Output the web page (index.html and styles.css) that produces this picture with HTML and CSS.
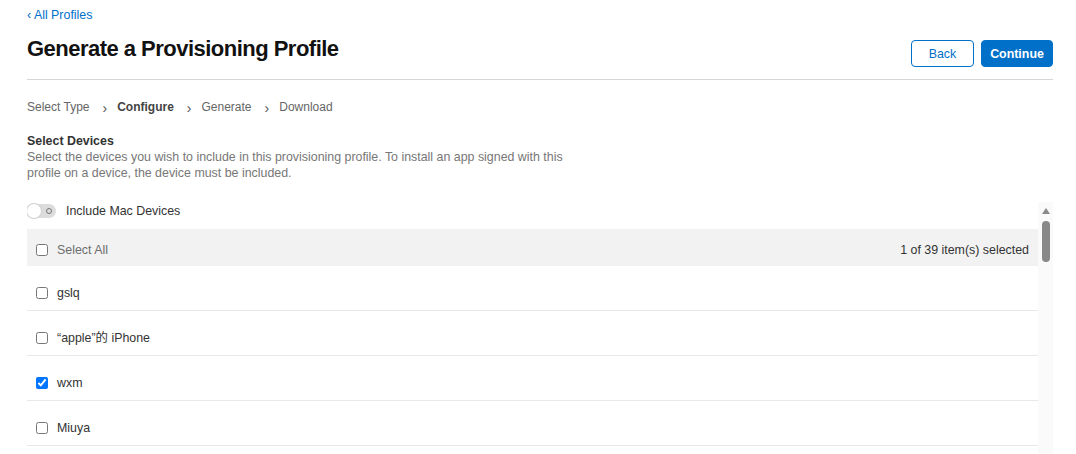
FILE: index.html
```html
<!DOCTYPE html>
<html>
<head>
<meta charset="utf-8">
<link rel="stylesheet" href="styles.css">
</head>
<body>
<div class="page">
  <a class="back-link" href="#">&#8249; All Profiles</a>
  <div class="header">
    <h1 class="title">Generate a Provisioning Profile</h1>
    <div class="actions">
      <button class="btn btn-outline">Back</button>
      <button class="btn btn-primary">Continue</button>
    </div>
  </div>
  <nav class="steps">
    <span class="step">Select Type</span>
    <span class="sep">&#8250;</span>
    <span class="step current">Configure</span>
    <span class="sep">&#8250;</span>
    <span class="step">Generate</span>
    <span class="sep">&#8250;</span>
    <span class="step">Download</span>
  </nav>
  <section class="section">
    <h2 class="section-title">Select Devices</h2>
    <p class="section-desc">Select the devices you wish to include in this provisioning profile. To install an app signed with this profile on a device, the device must be included.</p>
  </section>
  <div class="list-wrap">
    <div class="scroller">
      <div class="toggle-row">
        <span class="toggle"><span class="knob"></span><span class="off-mark"></span></span>
        <span class="toggle-label">Include Mac Devices</span>
      </div>
      <div class="table">
        <div class="thead">
          <label class="cell"><input type="checkbox" class="cb"><span class="muted">Select All</span></label>
          <span class="count">1 of 39 item(s) selected</span>
        </div>
        <div class="row"><label class="cell"><input type="checkbox" class="cb"><span>gslq</span></label></div>
        <div class="row"><label class="cell"><input type="checkbox" class="cb"><span>“apple”的 iPhone</span></label></div>
        <div class="row"><label class="cell"><input type="checkbox" class="cb" checked><span>wxm</span></label></div>
        <div class="row"><label class="cell"><input type="checkbox" class="cb"><span>Miuya</span></label></div>
      </div>
    </div>
    <div class="scrollbar">
      <span class="sb-arrow"></span>
      <span class="sb-thumb"></span>
    </div>
  </div>
</div>
</body>
</html>
```
FILE: styles.css
```css
html, body {
  margin: 0;
  padding: 0;
  background: #fff;
  overflow: hidden;
}
body {
  font-family: "Liberation Sans", Arial, "Noto Sans CJK SC", sans-serif;
  color: #333;
  font-size: 12.4px;
}
.page {
  width: 1026px;
  padding-left: 27px;
}
.back-link {
  display: block;
  color: #0070c9;
  text-decoration: none;
  font-size: 12.4px;
  line-height: 14px;
  padding-top: 8px;
}
.header {
  display: flex;
  align-items: flex-end;
  justify-content: space-between;
  border-bottom: 1px solid #d6d6d6;
  height: 57px;
}
.title {
  margin: 0 0 17px 0;
  font-size: 22px;
  line-height: 26px;
  font-weight: bold;
  color: #111;
  letter-spacing: -0.52px;
}
.actions {
  display: flex;
  gap: 7px;
  margin-bottom: 12px;
}
.btn {
  font-family: inherit;
  font-size: 12.4px;
  height: 27px;
  border-radius: 4px;
  padding: 0;
  cursor: pointer;
}
.btn-outline {
  width: 63px;
  background: #fff;
  color: #0070c9;
  border: 1px solid #0070c9;
}
.btn-primary {
  width: 72px;
  background: #0070c9;
  color: #fff;
  border: 1px solid #0070c9;
  font-weight: bold;
}
.steps {
  display: flex;
  align-items: center;
  margin-top: 20px;
  color: #666;
  font-size: 12px;
  line-height: 14px;
}
.step {
  padding-right: 1px;
}
.step.current {
  font-weight: bold;
  color: #444;
}
.sep {
  font-size: 14px;
  color: #555;
  margin: 0 10px 0 12px;
  position: relative;
  top: 1px;
}
.section {
  margin-top: 19px;
}
.section-title {
  margin: 0;
  font-size: 12.4px;
  line-height: 16px;
  font-weight: bold;
  color: #333;
}
.section-desc {
  margin: 0;
  width: 560px;
  color: #777;
  line-height: 16px;
}
.list-wrap {
  display: flex;
  margin-top: 21px;
  height: 260px;
}
.scroller {
  flex: 1;
  overflow: hidden;
}
.scrollbar {
  width: 15px;
  background: #fafafa;
  display: flex;
  flex-direction: column;
  align-items: center;
}
.sb-arrow {
  width: 0;
  height: 0;
  margin-top: 6px;
  border-left: 4px solid transparent;
  border-right: 4px solid transparent;
  border-bottom: 6px solid #8a8a8a;
}
.sb-thumb {
  width: 8px;
  height: 41px;
  margin-top: 7px;
  border-radius: 4px;
  background: #888;
}
.toggle-row {
  display: flex;
  align-items: center;
  height: 15px;
  margin-top: 1px;
}
.toggle {
  display: inline-flex;
  align-items: center;
  justify-content: space-between;
  width: 29px;
  height: 14px;
  border-radius: 8px;
  background: #dcdcdc;
  margin-right: 10px;
}
.knob {
  width: 14px;
  height: 14px;
  border-radius: 50%;
  background: #fff;
  box-shadow: 0 0 0 1px #d0d0d0;
}
.off-mark {
  width: 4px;
  height: 4px;
  border: 1px solid #777;
  border-radius: 50%;
  margin-right: 4px;
}
.toggle-label {
  color: #333;
}
.table {
  margin-top: 11px;
}
.thead {
  display: flex;
  align-items: flex-start;
  justify-content: space-between;
  height: 37px;
  box-sizing: border-box;
  background: #f2f2f2;
  padding: 14px 9px 0;
  line-height: 14px;
}
.cell {
  display: flex;
  align-items: center;
  gap: 9px;
}
.cb {
  margin: 0;
  width: 12px;
  height: 12px;
}
.muted {
  color: #6e6e6e;
}
.count {
  color: #333;
}
.row {
  height: 45px;
  border-bottom: 1px solid #e8e8e8;
  padding: 20px 9px 0;
  box-sizing: border-box;
  display: flex;
  align-items: flex-start;
}
.row .cell {
  line-height: 14px;
}
```
